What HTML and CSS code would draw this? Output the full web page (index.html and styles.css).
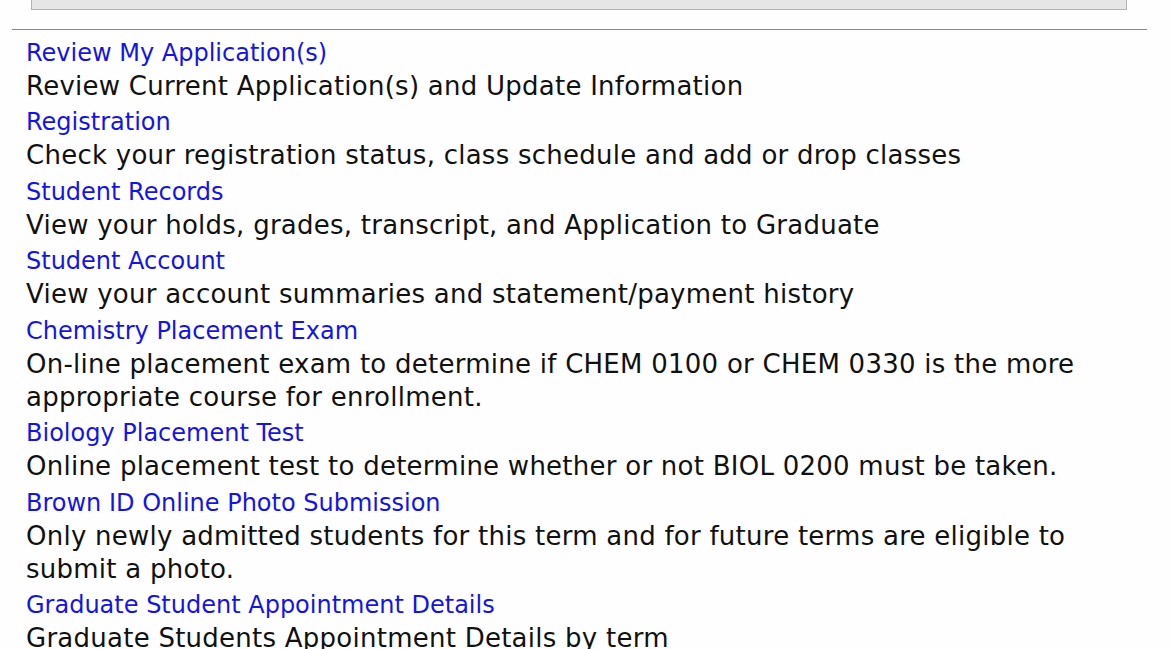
FILE: index.html
```html
<!DOCTYPE html>
<html>
<head>
<meta charset="utf-8">
<link rel="stylesheet" href="styles.css">
</head>
<body>
<div class="page">
  <div class="topbox"></div>
  <hr class="rule">
  <ul class="menu">
    <li><a href="#">Review My Application(s)</a><div class="desc">Review Current Application(s) and Update Information</div></li>
    <li><a href="#">Registration</a><div class="desc">Check your registration status, class schedule and add or drop classes</div></li>
    <li><a href="#">Student Records</a><div class="desc">View your holds, grades, transcript, and Application to Graduate</div></li>
    <li><a href="#">Student Account</a><div class="desc">View your account summaries and statement/payment history</div></li>
    <li><a href="#">Chemistry Placement Exam</a><div class="desc">On-line placement exam to determine if CHEM 0100 or CHEM 0330 is the more appropriate course for enrollment.</div></li>
    <li><a href="#">Biology Placement Test</a><div class="desc">Online placement test to determine whether or not BIOL 0200 must be taken.</div></li>
    <li><a href="#">Brown ID Online Photo Submission</a><div class="desc">Only newly admitted students for this term and for future terms are eligible to submit a photo.</div></li>
    <li><a href="#">Graduate Student Appointment Details</a><div class="desc">Graduate Students Appointment Details by term</div></li>
  </ul>
</div>
</body>
</html>
```
FILE: styles.css
```css
html, body {
  margin: 0;
  padding: 0;
  background: #fefefe;
}
body {
  font-family: "DejaVu Sans", Verdana, sans-serif;
  color: #111;
}
.page {
  padding: 0 23px 0 12px;
}
.topbox {
  margin: -10px 20px 0 19px;
  height: 19px;
  background: #e6e6e6;
  border: 1px solid #b4b4b4;
  border-top: none;
}
.rule {
  margin: 19px 0 0 0;
  border: none;
  border-top: 1px solid #8a8a8a;
  height: 0;
}
.menu {
  list-style: none;
  margin: 0;
  padding: 6.5px 0 0 14px;
  max-width: 1085px;
}
.menu li {
  padding: 0 0 3.5px 0;
}
.menu a {
  display: block;
  color: #1414e6;
  text-decoration: none;
  font-size: 24px;
  line-height: 33px;
}
.desc {
  font-size: 26px;
  letter-spacing: 0.25px;
  line-height: 33px;
}
```
